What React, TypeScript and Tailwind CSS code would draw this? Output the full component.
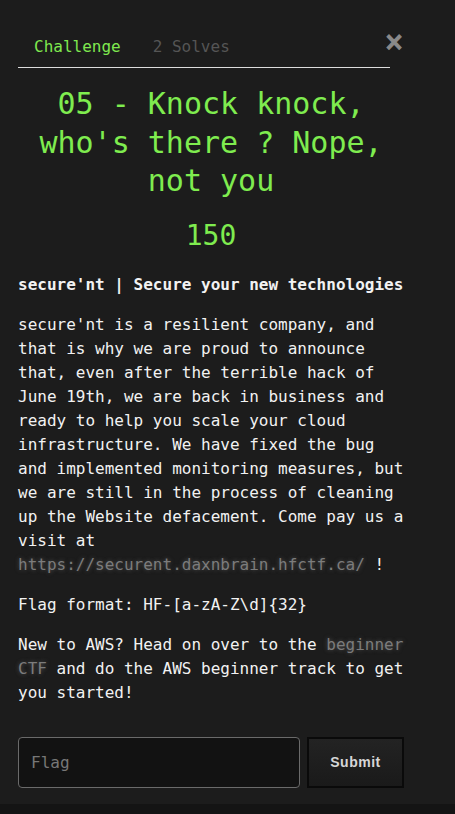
import React from 'react';

const mono = "font-['DejaVu_Sans_Mono',monospace]";

export default function App() {
  return (
    <div className={`min-h-[814px] bg-[#1c1c1c] flex flex-col ${mono}`}>
      <div className="flex-1 px-[18px] pt-[27px]">
        <div className="w-[386px]">
          <div className="relative">
            <div className="flex w-[372px] border-b border-[#dcdcdc] text-[16px] leading-[24px]">
              <button className="px-4 py-2 text-[#7fe84f]">Challenge</button>
              <button className="px-4 py-2 text-[#555555]">2 Solves</button>
            </div>
            <button className="absolute right-0 top-[3px] text-[24px] leading-none font-bold text-[#8a8a8a] [-webkit-text-stroke:1px_#8a8a8a] font-['DejaVu_Sans',sans-serif]">
              ×
            </button>
          </div>

          <h3 className="mt-[17px] text-center text-[30px] leading-[38.5px] text-[#7fec4f]">
            05 - Knock knock, who's there ? Nope, not you
          </h3>
          <h4 className="mt-[18px] text-center text-[28px] leading-[34px] text-[#7fec4f]">150</h4>

          <div className="mt-[20px] text-[16px] leading-[24px] text-[#f2f2f2]">
            <p className="font-bold">secure'nt | Secure your new technologies</p>
            <p className="mt-4">
              secure'nt is a resilient company, and that is why we are proud to announce that, even after
              the terrible hack of June 19th, we are back in business and ready to help you scale your
              cloud infrastructure. We have fixed the bug and implemented monitoring measures, but we are
              still in the process of cleaning up the Website defacement. Come pay us a visit at{' '}
              <a className="text-[#7c7c7c] [text-shadow:0_0_4px_#555]">https://securent.daxnbrain.hfctf.ca/</a> !
            </p>
            <p className="mt-4">Flag format: HF-[a-zA-Z\d]{'{32}'}</p>
            <p className="mt-4">
              New to AWS? Head on over to the{' '}
              <a className="text-[#7c7c7c] [text-shadow:0_0_4px_#555]">beginner CTF</a> and do the AWS
              beginner track to get you started!
            </p>
          </div>

          <div className="mt-[32px] flex gap-[7px]">
            <input
              placeholder="Flag"
              className={`w-[282px] h-[51px] rounded-[4px] border border-[#6a6a6a] bg-[#121212] px-3 text-[16px] text-[#ddd] placeholder:text-[#777] outline-none ${mono}`}
            />
            <button className="w-[97px] h-[51px] border-2 border-[#0a0a0a] bg-gradient-to-b from-[#232323] to-[#1a1a1a] text-[14px] font-bold tracking-[0.5px] text-[#d6d6d6] font-['Liberation_Sans',Arial,sans-serif]">
              Submit
            </button>
          </div>
        </div>
      </div>
      <div className="h-[10px] bg-[#141414]" />
    </div>
  );
}
